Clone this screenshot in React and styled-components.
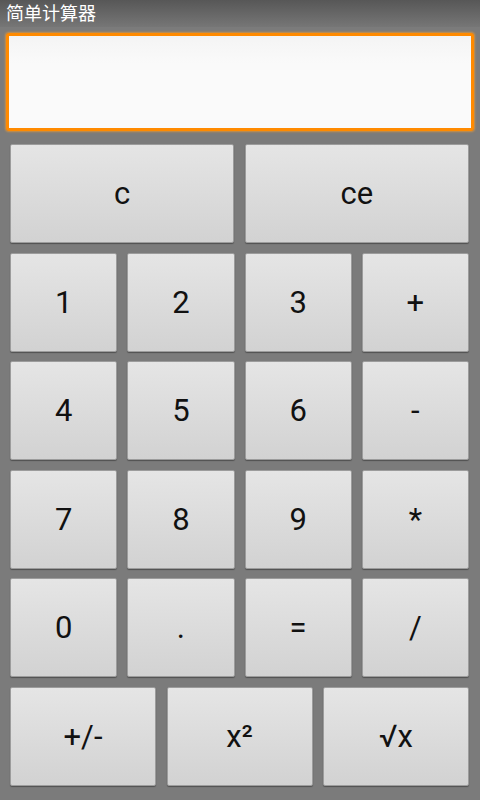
import React, { useState } from "react";
import styled, { createGlobalStyle } from "styled-components";

const GlobalStyle = createGlobalStyle`
  html, body {
    margin: 0;
    padding: 0;
  }
  body {
    font-family: Roboto, "Noto Sans", "Noto Sans CJK SC", sans-serif;
  }
`;

const Screen = styled.div`
  width: 480px;
  height: 800px;
  background: #7b7b7b;
  display: flex;
  flex-direction: column;
  overflow: hidden;
`;

const TitleBar = styled.div`
  height: 27px;
  padding-left: 6px;
  display: flex;
  align-items: center;
  background: linear-gradient(#575757, #767676);
  color: #fff;
  font-family: "Noto Sans CJK SC", sans-serif;
  font-size: 18px;
  line-height: 1;
  box-sizing: border-box;
  padding-bottom: 4px;
`;

const Display = styled.input`
  margin: 6px 6px 0;
  height: 98px;
  box-sizing: border-box;
  border: 3px solid #ff8a00;
  border-radius: 3px;
  background: linear-gradient(#f4f4f4, #fafafa 30%, #fafafa);
  box-shadow: 0 0 2px 1px rgba(255, 160, 40, 0.6);
  outline: none;
  font-family: Roboto, sans-serif;
  font-size: 28px;
  padding: 0 10px;
`;

const Keypad = styled.div`
  margin-top: 13px;
  padding: 0 11px 0 10px;
  display: flex;
  flex-direction: column;
  gap: 9.6px;
`;

const Row = styled.div`
  display: grid;
  grid-template-columns: repeat(${(p) => p.$cols}, 1fr);
  column-gap: ${(p) => (p.$cols === 4 ? 10 : 10.5)}px;
  height: 99px;
`;

const Key = styled.button`
  box-sizing: border-box;
  border: 1px solid #9c9c9c;
  border-radius: 2px;
  background: linear-gradient(#e5e5e5, #d2d2d2);
  box-shadow: 0 1px 1px rgba(0, 0, 0, 0.35);
  color: #111;
  font-family: Roboto, "DejaVu Sans", sans-serif;
  font-size: 31px;
  padding: 0;
  cursor: pointer;
`;

const rows = [
  ["c", "ce"],
  ["1", "2", "3", "+"],
  ["4", "5", "6", "-"],
  ["7", "8", "9", "*"],
  ["0", ".", "=", "/"],
  ["+/-", "x²", "√x"],
];

export default function App() {
  const [value, setValue] = useState("");

  return (
    <Screen>
      <GlobalStyle />
      <TitleBar>简单计算器</TitleBar>
      <Display value={value} onChange={(e) => setValue(e.target.value)} />
      <Keypad>
        {rows.map((row, i) => (
          <Row key={i} $cols={row.length}>
            {row.map((k) => (
              <Key key={k}>{k}</Key>
            ))}
          </Row>
        ))}
      </Keypad>
    </Screen>
  );
}
